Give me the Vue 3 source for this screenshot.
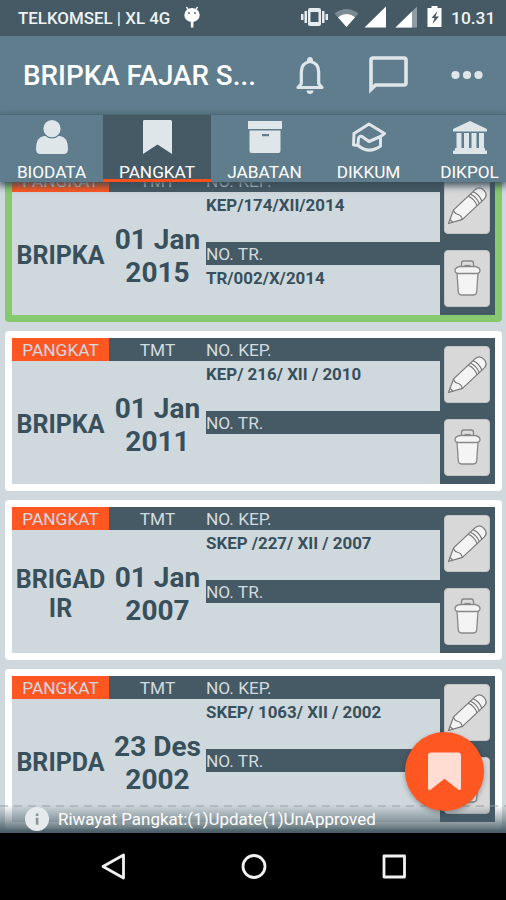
<template>
  <div class="screen">
    <header class="status-bar">
      <span class="carrier">TELKOMSEL | XL 4G</span>
      <svg class="droid" viewBox="0 0 18 24">
        <path d="M3.500 1l2 3.500M14.500 1l-2 3.500" stroke="#fff" stroke-width="1.500" />
        <ellipse cx="9" cy="9" rx="7.700" ry="7" fill="#fff" />
        <path d="M7.800 15h2.600v6.500H7.800z" fill="#fff" />
        <circle cx="6" cy="7" r=".9" fill="#455a64" />
        <circle cx="12" cy="7" r=".9" fill="#455a64" />
      </svg>
      <svg class="status-icons" viewBox="0 0 150 24">
        <g fill="#e5ecef">
          <path d="M10 2h9q2 0 2 2v14q0 2-2 2h-9q-2 0-2-2V4q0-2 2-2zm.5 4v10h8V6z" fill-rule="evenodd" />
          <path d="M4.500 5H7v12H4.500zM22 5h2.500v12H22zM1 8h2.500v6H1zM25.500 8H28v6h-2.500z" />
        </g>
        <path d="M34.500 7.500Q46.500-1.500 58.500 7.500L46.500 21z" fill="#7b8b93" />
        <path d="M38 11.300Q46.500 4.500 55 11.300L46.500 21z" fill="#fff" />
        <path d="M64.500 21.500L86 .5v21z" fill="#fff" />
        <path d="M95.500 21.500L117 .5v21z" fill="#8e9ca3" />
        <path d="M95.500 21.500L112 5.500v16z" fill="#fff" />
        <path d="M131.500 0h6v2h4v19h-14V2h4z" fill="#fff" />
        <path d="M137.500 5l-6 7h3l-2 6 6.500-7.500h-3.500z" fill="#455a64" />
      </svg>
      <span class="clock">10.31</span>
    </header>

    <div class="app-bar">
      <h1>BRIPKA FAJAR S...</h1>
      <svg class="bell" viewBox="0 0 32 38">
        <path d="M4 31.500l3.300-3.700V16q0-9 8.700-10.500Q24.700 7 24.700 16v11.800l3.300 3.700z" fill="none" stroke="#dfe6ea" stroke-width="3.200" stroke-linejoin="round" />
        <path d="M13 5q0-4 3-4t3 4zM12.500 34.500h7q-.5 3.500-3.500 3.500t-3.500-3.500z" fill="#dfe6ea" />
      </svg>
      <svg class="chat" viewBox="0 0 40 40">
        <path d="M3 34.500V5q0-2 2-2h31q2 0 2 2v23q0 2-2 2H7.500z" fill="none" stroke="#dfe6ea" stroke-width="3.600" />
      </svg>
      <svg class="more" viewBox="0 0 32 10">
        <circle v-for="x in [4.5, 16, 27.5]" :key="x" :cx="x" cy="5" r="4.100" fill="#dfe6ea" />
      </svg>
    </div>

    <nav class="tabs">
      <div v-for="tab in tabs" :key="tab.name" class="tab" :class="{ active: tab.active }">
        <svg viewBox="0 0 36 36">
          <g v-if="tab.icon === 'person'">
            <path d="M2 29q0-12 8-13h16q8 1 8 13 0 5-4.500 5h-23Q2 34 2 29z" />
            <circle cx="18" cy="8.700" r="9.800" fill="#5f7d8c" />
            <circle cx="18" cy="8.700" r="8.600" />
          </g>
          <path v-else-if="tab.icon === 'bookmark'" d="M4.500 0h27q1.500 0 1.500 1.500V34L18.500 24.500 4 34V1.500z" />
          <path v-else-if="tab.icon === 'box'" d="M1 1h34v8H1zM2.500 10.500h31V31q0 2-2 2h-27q-2 0-2-2zM15 14v2.200h7V14z" fill-rule="evenodd" />
          <g v-else-if="tab.icon === 'cap'" fill="none" stroke="#dfe6ea" stroke-width="3" stroke-linejoin="round" stroke-linecap="round">
            <path d="M3 13.500L18 4l15.500 9.500-4 3L18 21.500 11 16.500q-3-1-3.500 2L7 24.500M3 13.500l-.5 11.500 4.500.5Q18 34.500 29.500 26v-9" />
          </g>
          <path v-else d="M18 1l17 8v2.500H1V9zM4.500 13h5v15h-5zM12 13h5v15h-5zM19.500 13h5v15h-5zM27 13h5v15h-5zM3 28h30v2.500h2V34H1v-3.500h2z" />
        </svg>
        <span>{{ tab.name }}</span>
      </div>
    </nav>

    <main class="content">
      <div class="list">
        <section v-for="item in items" :key="item.tmt" class="card" :class="{ approved: item.approved }">
          <div class="col">
            <div class="head rank">PANGKAT</div>
            <div class="rank-value">{{ item.rank }}</div>
          </div>
          <div class="col">
            <div class="head">TMT</div>
            <div class="date-value">{{ item.tmt }}</div>
          </div>
          <div class="docs">
            <div class="head left">NO. KEP.</div>
            <div class="doc">{{ item.kep }}</div>
            <div class="head left">NO. TR.</div>
            <div class="doc">{{ item.tr }}</div>
          </div>
          <div class="actions">
            <button>
              <svg viewBox="0 0 46 57">
                <g transform="translate(4.500 46.500) rotate(-43)" fill="#f4f4f4" stroke="#777" stroke-width="1.200" stroke-linejoin="round">
                  <path d="M0 0L13-6.500H43Q48.500-6 48.500 0T43 6.500H13Z" />
                  <path d="M13-6.500q-2 3 0 6t0 7M33-6.500q3 6 0 13M36-6.500q3 6 0 13M39.500-6.500q3 6 0 13M4-2v4" fill="none" />
                </g>
              </svg>
            </button>
            <button>
              <svg viewBox="0 0 46 57">
                <g fill="#f4f4f4" stroke="#888" stroke-width="1.300" stroke-linejoin="round">
                  <path d="M13 23l1.300 19q.4 3 3.200 3h12q2.800 0 3.200-3L34 23z" />
                  <path d="M17.500 17.500v-4q0-2.500 2.500-2.500h7q2.500 0 2.500 2.500v4z" fill="#ddd" />
                  <path d="M20.500 15.500h6" />
                  <path d="M16 16.500h15q5 1 5 4 0 3-4 3H15q-4 0-4-3 0-3 5-4z" />
                </g>
              </svg>
            </button>
          </div>
        </section>
      </div>

      <div class="summary">
        <svg viewBox="0 0 24 24">
          <circle cx="12" cy="12" r="12" fill="#e6eaec" />
          <path d="M10.800 6.500h2.600v2.600h-2.600zM10.800 10.700h2.600v7h-2.600z" fill="#88959b" />
        </svg>
        <span>Riwayat Pangkat:(1)Update(1)UnApproved</span>
      </div>
      <div class="fab">
        <svg viewBox="0 0 34 40">
          <path d="M3 0h28q3 0 3 3v33q0 4-3 2L17 27 3 38q-3 2-3-2V3q0-3 3-3z" fill="#ffddd3" />
        </svg>
      </div>
    </main>

    <footer class="nav-bar">
      <svg viewBox="0 0 506 67" fill="none" stroke="#f2f2f2" stroke-width="2.800" stroke-linejoin="round">
        <path d="M123.500 22v23L103 33.500z" />
        <circle cx="254" cy="33.500" r="11" />
        <rect x="384" y="23" width="20.500" height="21" />
      </svg>
    </footer>
  </div>
</template>

<script setup>
const tabs = [
  { name: 'BIODATA', icon: 'person' },
  { name: 'PANGKAT', icon: 'bookmark', active: true },
  { name: 'JABATAN', icon: 'box' },
  { name: 'DIKKUM', icon: 'cap' },
  { name: 'DIKPOL', icon: 'bank' }
]

const items = [
  { rank: 'BRIPKA', tmt: '01 Jan 2015', kep: 'KEP/174/XII/2014', tr: 'TR/002/X/2014', approved: true },
  { rank: 'BRIPKA', tmt: '01 Jan 2011', kep: 'KEP/ 216/ XII / 2010', tr: '' },
  { rank: 'BRIGADIR', tmt: '01 Jan 2007', kep: 'SKEP /227/ XII / 2007', tr: '' },
  { rank: 'BRIPDA', tmt: '23 Des 2002', kep: 'SKEP/ 1063/ XII / 2002', tr: '' }
]
</script>

<style>
body {
  background: #000;
}
</style>

<style scoped>
* {
  box-sizing: border-box;
}
svg {
  display: block;
  flex: none;
}
.screen {
  width: 506px;
  height: 900px;
  overflow: hidden;
  display: flex;
  flex-direction: column;
  font-family: Roboto, "Liberation Sans", sans-serif;
  background: #cfd8dc;
}
.status-bar {
  flex: none;
  height: 36px;
  display: flex;
  align-items: center;
  padding-left: 18px;
  background: #455a64;
  color: #eef3f5;
  font-weight: 500;
}
.carrier {
  flex: none;
  width: 165px;
  font-size: 16.9px;
  white-space: nowrap;
}
.droid {
  width: 18px;
  height: 24px;
}
.status-icons {
  width: 150px;
  height: 24px;
  margin-left: 99px;
}
.clock {
  margin-left: 1px;
  font-size: 17.4px;
  white-space: nowrap;
}
.app-bar {
  flex: none;
  height: 78px;
  display: flex;
  align-items: center;
  padding-left: 23px;
  background: #5f7d8c;
}
h1 {
  margin: 0;
  width: 271px;
  color: #fff;
  font-size: 27.8px;
  font-weight: 500;
  white-space: nowrap;
}
.bell {
  width: 32px;
  height: 38px;
}
.chat {
  width: 40px;
  height: 40px;
  margin-left: 42px;
}
.more {
  width: 32px;
  height: 10px;
  margin-left: 43px;
}
.tabs {
  flex: none;
  height: 68px;
  display: flex;
  background: #5f7d8c;
  border-top: 1px solid #4f6a77;
  position: relative;
  z-index: 1;
  box-shadow: 0 3px 7px 1px rgba(55, 75, 85, .9);
}
.tab {
  flex: none;
  width: 107px;
  padding-top: 5px;
  display: flex;
  flex-direction: column;
  align-items: center;
  color: #fff;
  font-size: 17.2px;
}
.tab:first-child {
  width: 103px;
}
.tab:nth-child(4) {
  width: 101px;
}
.tab:last-child {
  width: 101px;
}
.tab svg {
  width: 36px;
  height: 36px;
  fill: #dfe6ea;
}
.tab span {
  line-height: 20px;
  margin-top: 6px;
}
.tab.active {
  width: 108px;
  background: #455a64;
  border-bottom: 3px solid #f4511e;
}
.content {
  flex: none;
  height: 651px;
  position: relative;
  overflow: hidden;
}
.list {
  display: flex;
  flex-direction: column;
  gap: 9px;
  padding: 0 4px 0 5px;
  margin-top: -20px;
}
.card {
  height: 160px;
  display: grid;
  grid-template-columns: 97px 97px 234px 55px;
  border: 7px solid #fff;
  border-radius: 4px;
  color: #37505c;
}
.card.approved {
  border-color: #87c96f;
}
.col,
.docs {
  display: flex;
  flex-direction: column;
}
.head {
  flex: none;
  height: 23px;
  line-height: 25px;
  background: #455a64;
  color: #d3dce0;
  font-size: 17.3px;
  text-align: center;
}
.head.rank {
  background: #ff5722;
}
.head.left {
  text-align: left;
}
.rank-value,
.date-value {
  flex: 1;
  display: flex;
  align-items: center;
  justify-content: center;
  text-align: center;
  font-weight: 700;
  word-break: break-all;
}
.rank-value {
  padding: 4px 2px 0;
  font-size: 25px;
  line-height: 29px;
}
.date-value {
  padding-top: 4px;
  font-size: 28px;
  line-height: 33px;
  word-break: normal;
}
.doc {
  height: 50px;
  padding-top: 3px;
  font-size: 16.9px;
  line-height: 20px;
  font-weight: 700;
  white-space: nowrap;
}
.actions {
  display: flex;
  flex-direction: column;
  gap: 16px;
  padding: 8px 5px 8px 4px;
  background: #455a64;
}
button {
  height: 57px;
  padding: 0;
  border: 1px solid #c3c6c8;
  border-radius: 4px;
  background: #d8d8d8;
  display: flex;
  align-items: center;
  justify-content: center;
}
button svg {
  width: 46px;
  height: 57px;
}
.summary {
  position: absolute;
  left: 0;
  right: 0;
  bottom: 0;
  height: 28px;
  padding-left: 25px;
  display: flex;
  align-items: center;
  background: linear-gradient(rgba(69, 90, 100, 0), rgba(69, 90, 100, .45) 50%, #455a64) border-box;
  color: #fff;
  font-size: 16.95px;
}
.summary::before {
  content: "";
  position: absolute;
  left: 0;
  right: 0;
  top: 0;
  height: 2px;
  background: repeating-linear-gradient(90deg, rgba(140, 155, 163, .45) 0 8px, transparent 8px 14px);
}
.summary svg {
  width: 24px;
  height: 24px;
  margin-right: 9px;
}
.fab {
  position: absolute;
  left: 405px;
  top: 550px;
  width: 79px;
  height: 79px;
  border-radius: 50%;
  background: #ff5722;
  box-shadow: 0 2px 5px rgba(0, 0, 0, .3);
  display: flex;
  align-items: center;
  justify-content: center;
}
.fab svg {
  width: 33px;
  height: 40px;
}
.nav-bar {
  flex: none;
  height: 67px;
  background: #000;
}
.nav-bar svg {
  width: 506px;
  height: 67px;
}
</style>
